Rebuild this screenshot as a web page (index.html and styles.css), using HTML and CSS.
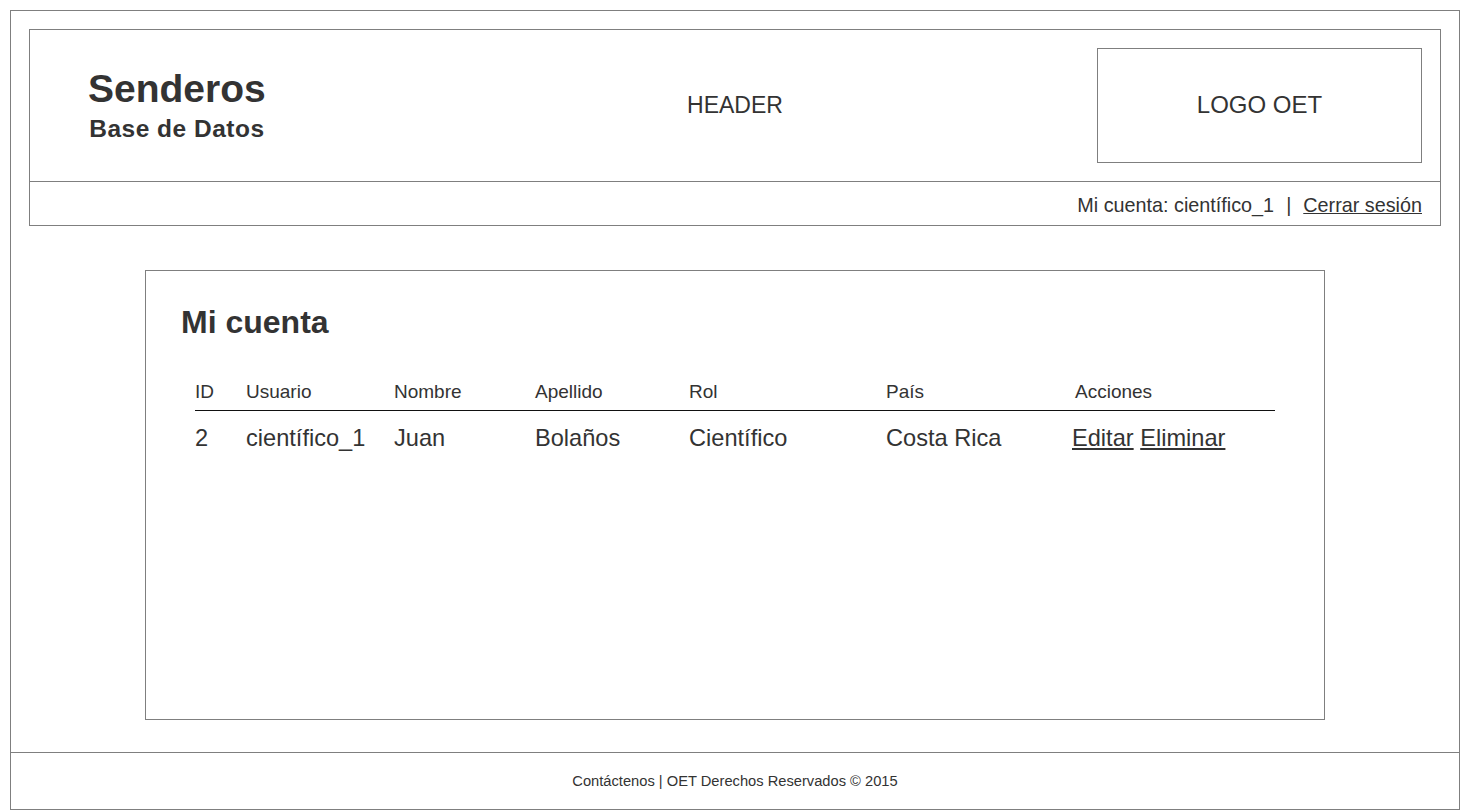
FILE: index.html
```html
<!DOCTYPE html>
<html lang="es">
<head>
<meta charset="utf-8">
<title>Senderos - Mi cuenta</title>
<link rel="stylesheet" href="styles.css">
</head>
<body>
<div class="frame">
  <header class="site-header">
    <div class="header-top">
      <div class="brand-col">
        <div class="brand">
          <div class="brand-title">Senderos</div>
          <div class="brand-sub">Base de Datos</div>
        </div>
      </div>
      <div class="header-label">HEADER</div>
      <div class="logo-col">
        <div class="logo-box">LOGO OET</div>
      </div>
    </div>
    <div class="header-bar">
      <span class="account">Mi cuenta: científico_1</span>
      <span class="sep">|</span>
      <a class="link" href="#">Cerrar sesión</a>
    </div>
  </header>

  <main class="content">
    <h1 class="title">Mi cuenta</h1>
    <div class="table">
      <div class="row head">
        <div>ID</div>
        <div>Usuario</div>
        <div>Nombre</div>
        <div>Apellido</div>
        <div>Rol</div>
        <div>País</div>
        <div>Acciones</div>
      </div>
      <div class="row data">
        <div>2</div>
        <div>científico_1</div>
        <div>Juan</div>
        <div>Bolaños</div>
        <div>Científico</div>
        <div>Costa Rica</div>
        <div class="actions"><a class="link" href="#">Editar</a> <a class="link" href="#">Eliminar</a></div>
      </div>
    </div>
  </main>

  <footer class="site-footer">Contáctenos | OET Derechos Reservados © 2015</footer>
</div>
</body>
</html>
```

FILE: styles.css
```css
* { box-sizing: border-box; }

html, body {
  margin: 0;
  padding: 0;
  background: #ffffff;
}

body {
  font-family: "Liberation Sans", Arial, sans-serif;
  color: #333333;
}

.frame {
  margin: 10px 0 0 10px;
  width: 1450px;
  height: 800px;
  border: 1px solid #7f7f7f;
  display: flex;
  flex-direction: column;
}

.site-header {
  margin: 18px 18px 0 18px;
  border: 1px solid #7f7f7f;
}

.header-top {
  height: 152px;
  border-bottom: 1px solid #7f7f7f;
  display: grid;
  grid-template-columns: 1fr auto 1fr;
  align-items: center;
}

.brand-col {
  align-self: start;
  padding-left: 58px;
  padding-top: 40px;
}

.brand {
  display: inline-block;
  text-align: center;
}

.brand-title {
  font-size: 39px;
  line-height: 38px;
  font-weight: bold;
}

.brand-sub {
  margin-top: 8px;
  font-size: 24.5px;
  line-height: 25px;
  font-weight: bold;
  letter-spacing: 0.5px;
}

.header-label {
  font-size: 23px;
  line-height: 28px;
  margin-top: -2px;
}

.logo-col {
  align-self: start;
  display: flex;
  justify-content: flex-end;
  padding: 18px 18px 0 0;
}

.logo-box {
  width: 325px;
  height: 115px;
  border: 1px solid #7f7f7f;
  display: flex;
  align-items: center;
  justify-content: center;
  font-size: 24px;
  padding-bottom: 1px;
}

.header-bar {
  height: 43px;
  padding: 4px 18px 0 0;
  display: flex;
  align-items: center;
  justify-content: flex-end;
  font-size: 19.8px;
}

.sep {
  margin: 0 12px;
}

.link {
  color: #333333;
  text-decoration: underline;
}

.content {
  margin: 44px 134px 0 134px;
  height: 450px;
  border: 1px solid #7f7f7f;
  padding: 33px 49px 0 35px;
}

.title {
  margin: 0;
  font-size: 32px;
  line-height: 36px;
  font-weight: bold;
}

.table {
  margin: 40px 0 0 14px;
}

.row {
  display: grid;
  grid-template-columns: 51px 148px 141px 154px 197px 189px 1fr;
}

.row.head {
  font-size: 19px;
  line-height: 24px;
  padding-bottom: 6px;
  border-bottom: 1px solid #111111;
}

.row.data {
  padding-top: 13px;
  font-size: 23.6px;
  line-height: 28px;
}

.actions {
  margin-left: -3px;
}

.site-footer {
  margin-top: 32px;
  border-top: 1px solid #7f7f7f;
  flex: 1;
  display: flex;
  align-items: center;
  justify-content: center;
  font-size: 14.7px;
}
```
